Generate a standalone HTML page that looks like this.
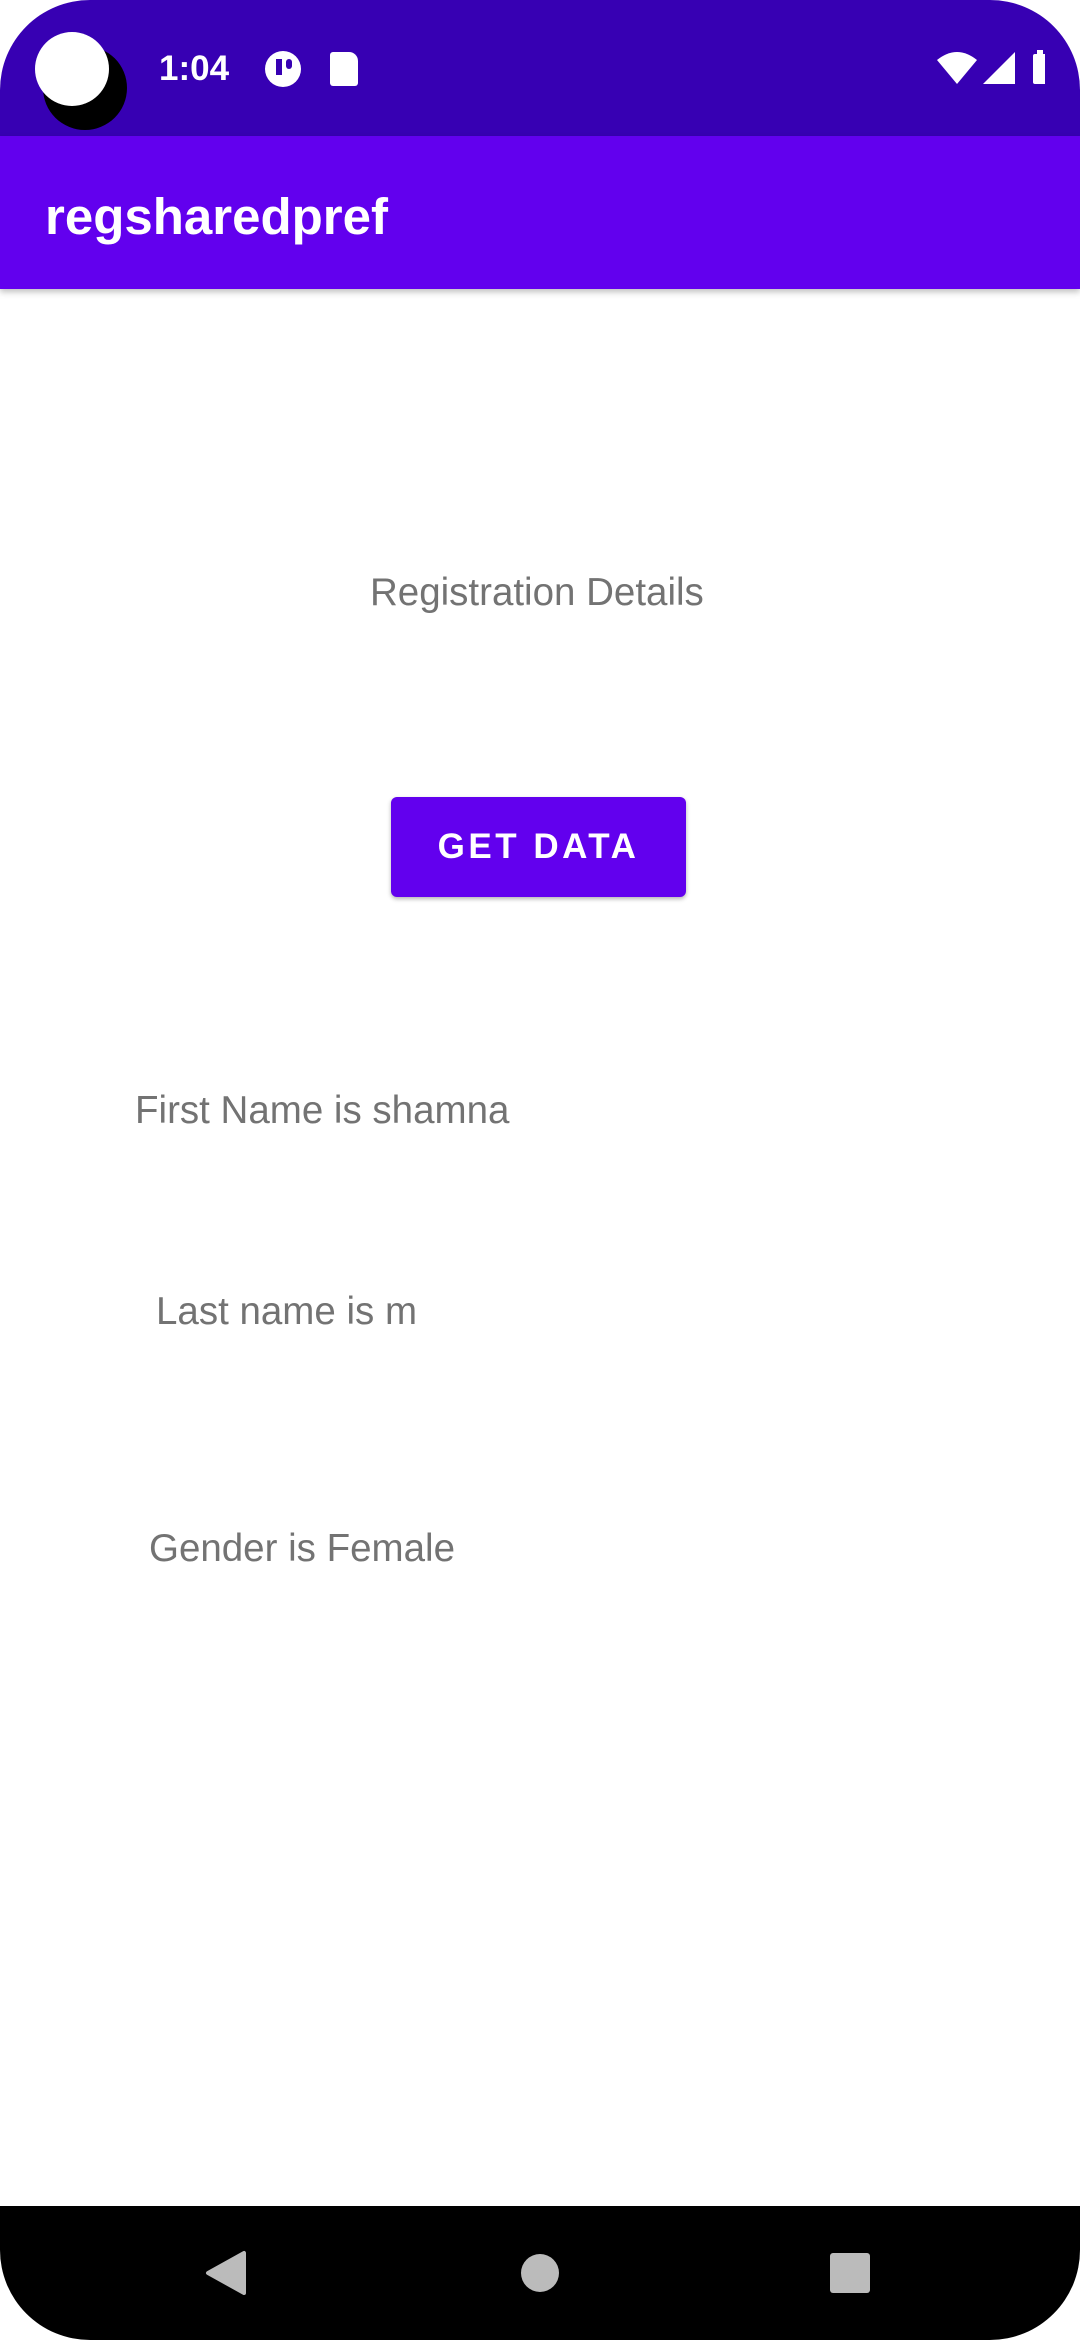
<!DOCTYPE html>
<html><head><meta charset="utf-8"><style>
*{margin:0;padding:0;box-sizing:border-box}
html,body{width:1080px;height:2340px;background:#fff;overflow:hidden;font-family:"Liberation Sans",Roboto,sans-serif}
.frame{position:absolute;left:0;top:0;width:1080px;height:2340px;border-radius:90px;overflow:hidden;background:#fff}
.status{position:absolute;left:0;top:0;width:1080px;height:136px;background:#3700B3}
.appbar{position:absolute;left:0;top:136px;width:1080px;height:153px;background:#6200EE;box-shadow:0 3px 6px rgba(0,0,0,.25)}
.title{position:absolute;left:45px;top:184px;color:#fff;font-size:51px;font-weight:bold;line-height:66px}
.t{position:absolute;color:#737373;font-size:38.5px;line-height:44px;white-space:nowrap}
.btn{position:absolute;left:391px;top:797px;width:295px;height:100px;background:#6200EE;border-radius:6px;box-shadow:0 2px 4px rgba(0,0,0,.3);color:#fff;font-size:35px;font-weight:bold;letter-spacing:3.5px;text-align:center;line-height:100px}
.nav{position:absolute;left:0;top:2206px;width:1080px;height:134px;background:#000}
</style></head><body>
<div class="frame">
<div class="status">
<div style="position:absolute;left:43px;top:46px;width:84px;height:84px;border-radius:50%;background:#000"></div>
<div style="position:absolute;left:35px;top:32px;width:74px;height:74px;border-radius:50%;background:#fff"></div>
<div style="position:absolute;left:159px;top:49px;color:#fff;font-size:35px;font-weight:bold">1:04</div>
<div style="position:absolute;left:265px;top:51px;width:36px;height:36px;border-radius:50%;background:#fff"></div>
<div style="position:absolute;left:276px;top:59px;width:6px;height:16px;background:#3700B3"></div>
<div style="position:absolute;left:286px;top:59px;width:6px;height:10px;background:#3700B3;border-radius:3px"></div>
<div style="position:absolute;left:330px;top:52px;width:28px;height:34px;background:#fff;border-radius:3px 9px 3px 3px"></div>
<svg style="position:absolute;left:935px;top:50px" width="110" height="36" viewBox="0 0 110 36">
<path d="M2 10 Q22 -6 42 10 L22 34 Z" fill="#fff"/>
<path d="M48 34 L80 2 L80 34 Z" fill="#fff"/>
<rect x="98" y="4" width="14" height="30" rx="2" fill="#fff"/>
<rect x="102" y="0" width="6" height="5" fill="#fff"/>
</svg>
</div>
<div class="appbar"></div>
<div class="title">regsharedpref</div>
<div class="t" style="left:370px;top:571px">Registration Details</div>
<div class="btn">GET DATA</div>
<div class="t" style="left:135px;top:1089px">First Name is shamna</div>
<div class="t" style="left:156px;top:1290px">Last name is m</div>
<div class="t" style="left:149px;top:1527px">Gender is Female</div>
<div class="nav">
<svg style="position:absolute;left:0;top:0" width="1080" height="134" viewBox="0 0 1080 134">
<path d="M208 67 L244 47 L244 87 Z" fill="#bbb" stroke="#bbb" stroke-width="4" stroke-linejoin="round"/>
<circle cx="540" cy="67" r="19" fill="#bbb"/>
<rect x="830" y="47" width="40" height="40" rx="3" fill="#bbb"/>
</svg>
</div>
</div>
</body></html>
